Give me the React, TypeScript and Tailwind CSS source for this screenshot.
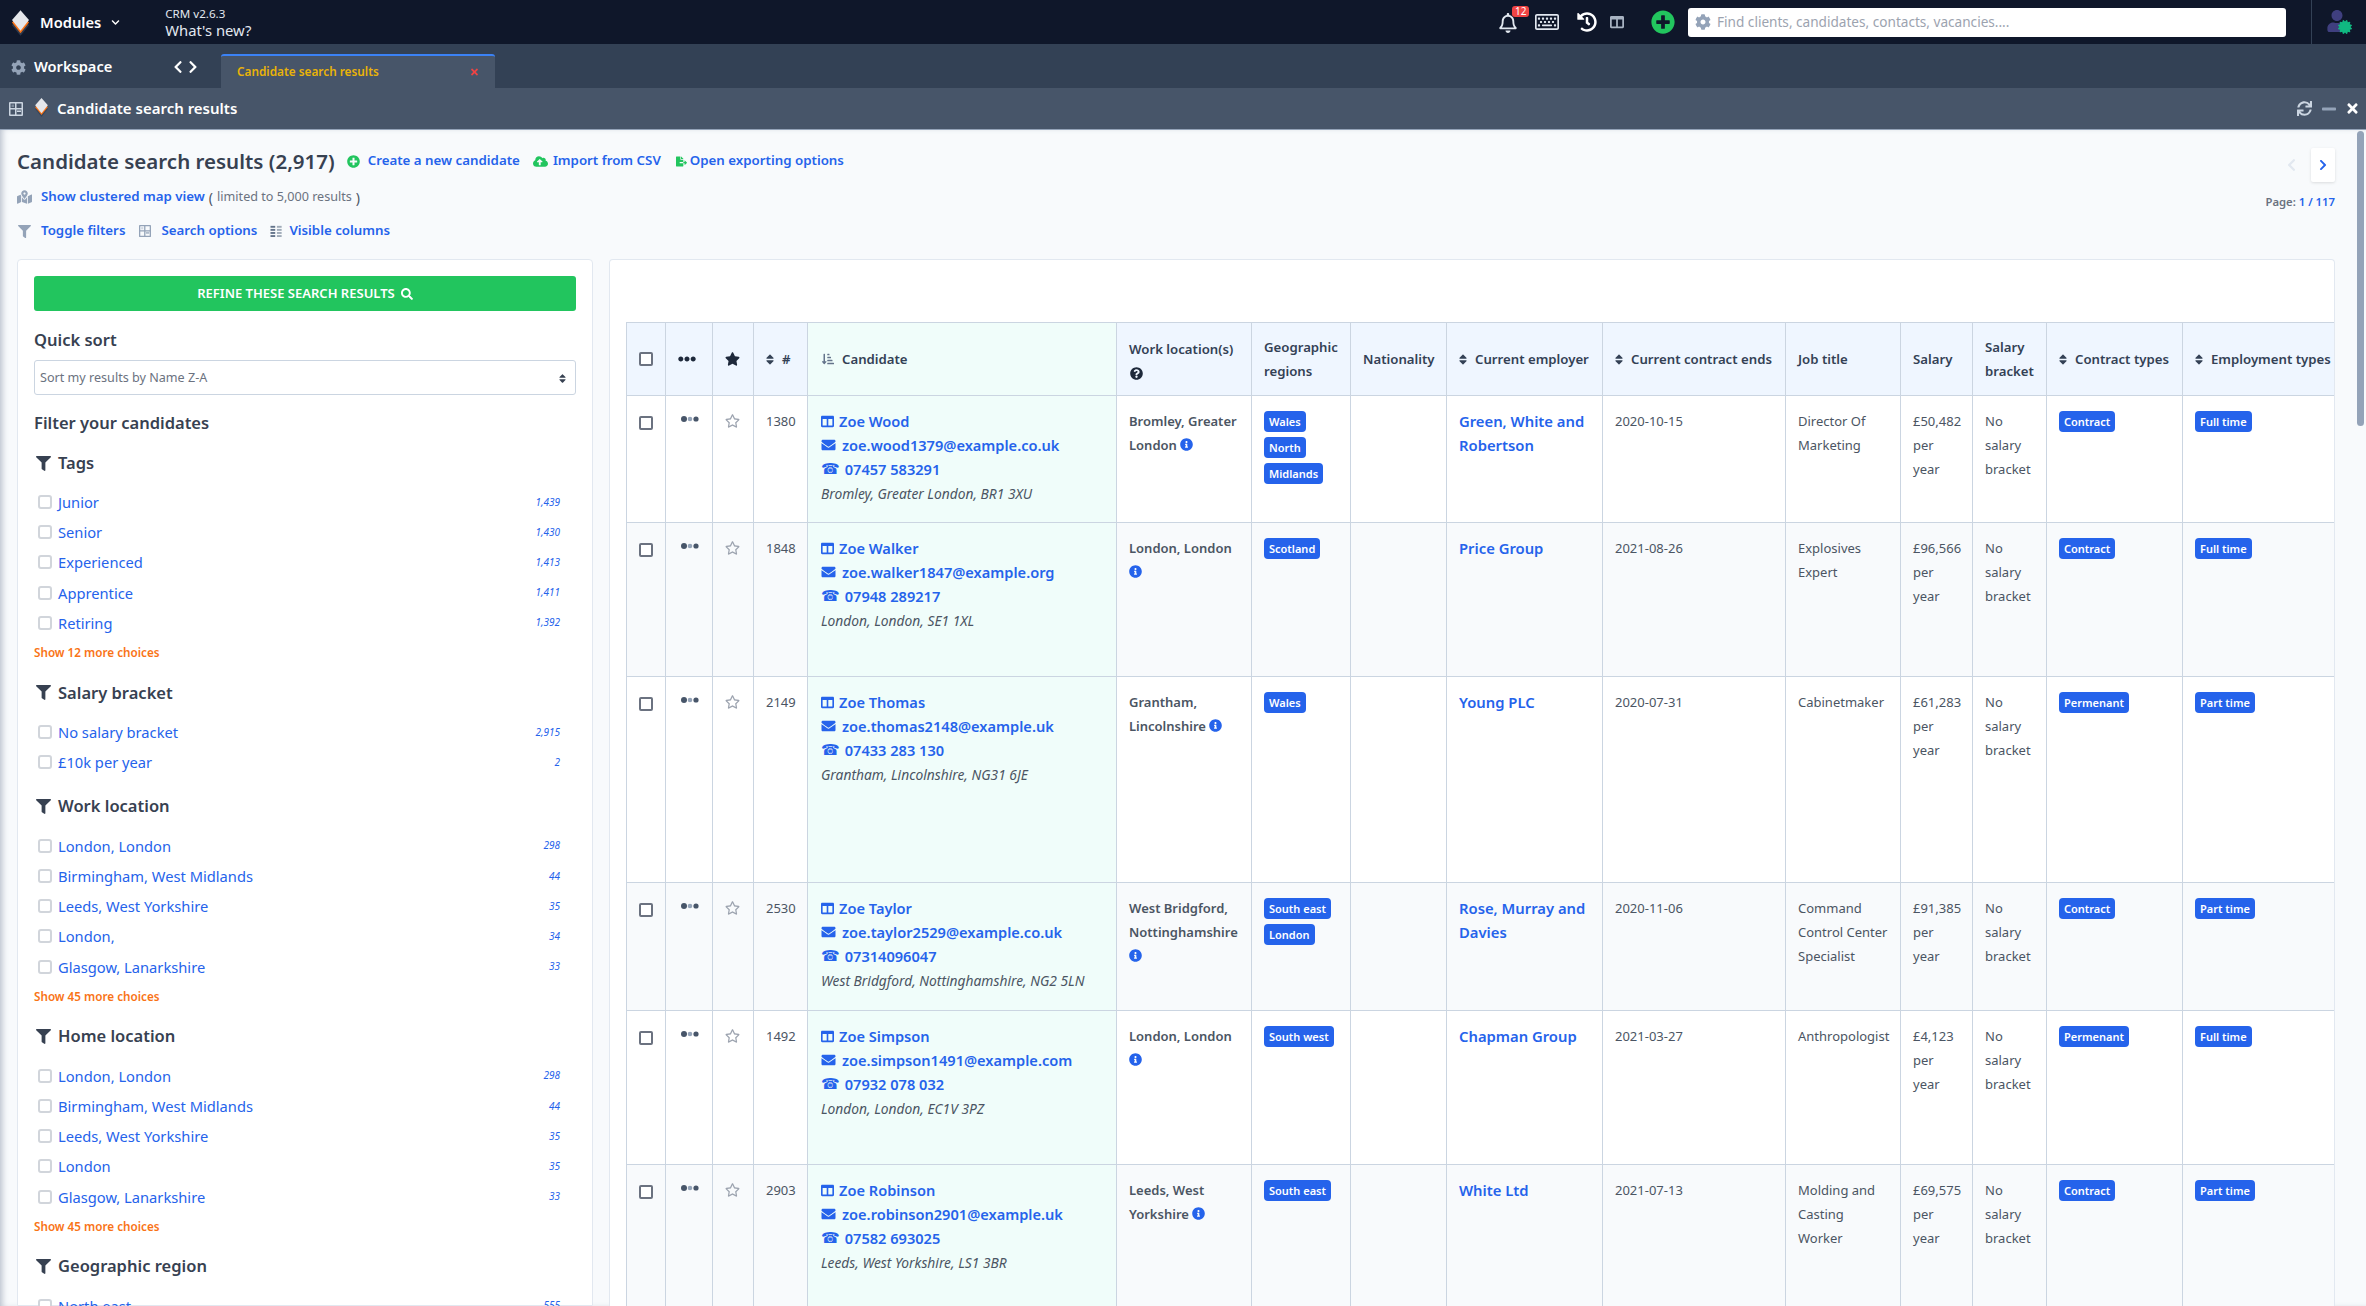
import { FaRegBell, FaRegKeyboard, FaHistory, FaPlusCircle, FaCog, FaChevronLeft, FaChevronRight, FaChevronDown, FaTimes, FaSync, FaMinus, FaCloudUploadAlt, FaFileExport, FaMapMarkedAlt, FaFilter, FaSearch, FaSort, FaEllipsisH, FaStar, FaRegStar, FaColumns, FaEnvelope, FaInfoCircle, FaQuestionCircle, FaSortAmountDownAlt, FaUser, FaCertificate } from 'react-icons/fa';

const Logo = ({ className }: { className?: string }) => (
  <svg viewBox="0 0 20 30" className={className} aria-hidden>
    <path d="M10 6 L20 17.5 L10 30 L0 17.5 Z" fill="#334155" opacity="0.8" />
    <path d="M10 3 L20 14.5 L10 27 L0 14.5 Z" fill="#f97316" />
    <path d="M10 0 L20 11.5 L10 24 L0 11.5 Z" fill="#e5e7eb" />
  </svg>
);

const LayoutIcon = ({ className }: { className?: string }) => (
  <svg viewBox="0 0 14 14" className={className} fill="currentColor" aria-hidden>
    <path d="M0 1a1 1 0 0 1 1-1h12a1 1 0 0 1 1 1v12a1 1 0 0 1-1 1H1a1 1 0 0 1-1-1Zm1.5.5v4.5h4.5V1.5Zm0 6V12.5h4.5V7.5Zm6 0v5h5v-5Zm0-6v4.5h5V1.5Z" fillRule="evenodd" />
    <rect x="2.5" y="2.5" width="2.5" height="2.5" opacity=".4" />
    <rect x="8" y="8.5" width="4" height="1.5" />
  </svg>
);

const ColumnsIcon = ({ className }: { className?: string }) => (
  <svg viewBox="0 0 14 14" className={className} fill="currentColor" aria-hidden>
    <rect x="0" y="1" width="5.5" height="2.2" /><rect x="0" y="4.6" width="5.5" height="2.2" /><rect x="0" y="8.2" width="5.5" height="2.2" /><rect x="0" y="11.8" width="5.5" height="2.2" />
    <rect x="7.5" y="1" width="5.5" height="2.2" opacity=".6" /><rect x="7.5" y="4.6" width="5.5" height="2.2" opacity=".6" /><rect x="7.5" y="8.2" width="5.5" height="2.2" opacity=".6" /><rect x="7.5" y="11.8" width="5.5" height="2.2" opacity=".6" />
  </svg>
);

const RowDots = () => (
  <svg viewBox="0 0 18 6" className="ml-[3px] h-[6px] w-[18px]" aria-hidden>
    <circle cx="3" cy="3" r="3" fill="#475569" /><circle cx="9" cy="3" r="2.3" fill="#94a3b8" /><circle cx="15" cy="3" r="2.6" fill="#475569" />
  </svg>
);

interface Section { title: string; items: [string, string][]; more?: number }
const SECTIONS: Section[] = [
  { title: 'Tags', more: 12, items: [['Junior', '1,439'], ['Senior', '1,430'], ['Experienced', '1,413'], ['Apprentice', '1,411'], ['Retiring', '1,392']] },
  { title: 'Salary bracket', items: [['No salary bracket', '2,915'], ['£10k per year', '2']] },
  { title: 'Work location', more: 45, items: [['London, London', '298'], ['Birmingham, West Midlands', '44'], ['Leeds, West Yorkshire', '35'], ['London,', '34'], ['Glasgow, Lanarkshire', '33']] },
  { title: 'Home location', more: 45, items: [['London, London', '298'], ['Birmingham, West Midlands', '44'], ['Leeds, West Yorkshire', '35'], ['London', '35'], ['Glasgow, Lanarkshire', '33']] },
  { title: 'Geographic region', items: [['North east', '555']] },
];

interface Row { h: string; num: number; name: string; email: string; phone: string; addr: string; loc: string; regions: string[]; employer: string; ends: string; job: string; salary: string; contract: string; employment: string }
const ROWS: Row[] = [
  { h: 'h-[127px]', num: 1380, name: 'Zoe Wood', email: 'zoe.wood1379@example.co.uk', phone: '07457 583291', addr: 'Bromley, Greater London, BR1 3XU', loc: 'Bromley, Greater London', regions: ['Wales', 'North', 'Midlands'], employer: 'Green, White and Robertson', ends: '2020-10-15', job: 'Director Of Marketing', salary: '£50,482 per year', contract: 'Contract', employment: 'Full time' },
  { h: 'h-[154px]', num: 1848, name: 'Zoe Walker', email: 'zoe.walker1847@example.org', phone: '07948 289217', addr: 'London, London, SE1 1XL', loc: 'London, London', regions: ['Scotland'], employer: 'Price Group', ends: '2021-08-26', job: 'Explosives Expert', salary: '£96,566 per year', contract: 'Contract', employment: 'Full time' },
  { h: 'h-[206px]', num: 2149, name: 'Zoe Thomas', email: 'zoe.thomas2148@example.uk', phone: '07433 283 130', addr: 'Grantham, Lincolnshire, NG31 6JE', loc: 'Grantham, Lincolnshire', regions: ['Wales'], employer: 'Young PLC', ends: '2020-07-31', job: 'Cabinetmaker', salary: '£61,283 per year', contract: 'Permenant', employment: 'Part time' },
  { h: 'h-[128px]', num: 2530, name: 'Zoe Taylor', email: 'zoe.taylor2529@example.co.uk', phone: '07314096047', addr: 'West Bridgford, Nottinghamshire, NG2 5LN', loc: 'West Bridgford, Nottinghamshire', regions: ['South east', 'London'], employer: 'Rose, Murray and Davies', ends: '2020-11-06', job: 'Command Control Center Specialist', salary: '£91,385 per year', contract: 'Contract', employment: 'Part time' },
  { h: 'h-[154px]', num: 1492, name: 'Zoe Simpson', email: 'zoe.simpson1491@example.com', phone: '07932 078 032', addr: 'London, London, EC1V 3PZ', loc: 'London, London', regions: ['South west'], employer: 'Chapman Group', ends: '2021-03-27', job: 'Anthropologist', salary: '£4,123 per year', contract: 'Permenant', employment: 'Full time' },
  { h: 'h-[154px]', num: 2903, name: 'Zoe Robinson', email: 'zoe.robinson2901@example.uk', phone: '07582 693025', addr: 'Leeds, West Yorkshire, LS1 3BR', loc: 'Leeds, West Yorkshire', regions: ['South east'], employer: 'White Ltd', ends: '2021-07-13', job: 'Molding and Casting Worker', salary: '£69,575 per year', contract: 'Contract', employment: 'Part time' },
];

const WIDTHS = ['w-[39px]', 'w-[47px]', 'w-[41px]', 'w-[54px]', 'w-[309px]', 'w-[135px]', 'w-[99px]', 'w-[96px]', 'w-[156px]', 'w-[183px]', 'w-[115px]', 'w-[72px]', 'w-[74px]', 'w-[136px]', 'w-[153px]'];
const th = 'border border-[#cbd5e1] px-[12px] text-left align-middle text-[13.2px] font-semibold leading-6 text-[#334155]';
const td = 'border border-[#cbd5e1] px-[12px] pt-[13px] align-top text-[13px] leading-6 text-[#4b5563]';
const link = 'text-[13.3px] font-semibold text-[#2563eb]';
const sortIcon = 'h-[13px] w-[8px] shrink-0';

const Tag = ({ children }: { children: string }) => (
  <div className="mb-[5px] w-fit whitespace-nowrap rounded-[4px] bg-[#2563eb] px-[5px] text-[11px] font-semibold leading-[21px] text-white">{children}</div>
);

const Box = ({ dark }: { dark?: boolean }) => (
  <input type="checkbox" aria-label="Select" className={dark ? 'block h-[14px] w-[14px] appearance-none rounded-[2px] border-2 border-[#6b7280] bg-white' : 'block h-[14px] w-[14px] shrink-0 appearance-none rounded-[3px] border-2 border-[#d1d5db] bg-white'} />
);

function FilterSection({ section }: { section: Section }) {
  return (
    <div className={section.more ? 'pb-[16px]' : 'pb-[17.5px]'}>
      <div className="mb-[12px] flex h-[24px] items-center text-[16.5px] font-semibold text-[#374151]">
        <FaFilter className="ml-[2px] mr-[7px] h-[15px] w-[15px] text-[#374151]" />{section.title}
      </div>
      {section.items.map(([label, count]) => (
        <div key={label} className="flex h-[30.2px] items-center pl-[4px] pr-[16px]">
          <Box />
          <span className="ml-[6px] flex-1 text-[14.7px] text-[#2563eb]">{label}</span>
          <span className="text-[10px] italic text-[#2563eb]">{count}</span>
        </div>
      ))}
      {section.more && <div className="mb-[5px] mt-[6px] text-[11.7px] font-semibold leading-[16px] text-[#f97316]">Show {section.more} more choices</div>}
    </div>
  );
}

export default function App() {
  return (
    <div className="flex h-[1306px] w-[2366px] flex-col overflow-hidden bg-[#f8fafc] font-['Noto_Sans',sans-serif]">
      {/* top bar */}
      <div className="flex h-[44px] shrink-0 items-center bg-[#0f172a] text-white">
        <Logo className="ml-[12px] mt-[2px] h-[26px] w-[17px]" />
        <span className="ml-[11px] text-[14.7px] font-semibold">Modules</span>
        <FaChevronDown className="ml-[10px] h-[9px] w-[9px]" />
        <div className="ml-[45px] flex flex-col text-[#e2e8f0]">
          <span className="text-[11.6px] leading-[15px]">CRM v2.6.3</span>
          <span className="text-[14.8px] leading-[18px]">What's new?</span>
        </div>
        <div className="relative ml-auto h-full w-[30px]">
          <FaRegBell className="absolute left-0 top-[13px] h-[20px] w-[18px] text-[#e2e8f0]" />
          <span className="absolute left-[13px] top-[6px] rounded-[3px] bg-[#ef4444] px-[3px] text-[10px] leading-[11px] text-white">12</span>
        </div>
        <FaRegKeyboard className="ml-[6px] h-[24px] w-[24px] text-[#e2e8f0]" />
        <FaHistory className="ml-[18px] h-[20px] w-[20px] text-white" />
        <FaColumns className="ml-[12px] h-[14px] w-[16px] text-[#a8b3c2]" />
        <FaPlusCircle className="ml-[26px] h-[24px] w-[24px] text-[#22c55e]" />
        <div className="ml-[13px] flex h-[29px] w-[598px] items-center rounded-[3px] bg-white pl-[7px]">
          <FaCog className="h-[16px] w-[16px] text-[#94a3b8]" />
          <span className="ml-[6px] pt-[1px] text-[13.6px] text-[#9ca3af]">Find clients, candidates, contacts, vacancies....</span>
        </div>
        <div className="ml-[25px] h-full w-px bg-[#334155]" />
        <div className="relative ml-[15px] mr-[14px] h-[24px] w-[25px]">
          <FaUser className="h-[22px] w-[20px] text-[#3f3f7f]" />
          <FaCertificate className="absolute bottom-0 right-0 h-[14px] w-[14px] text-[#10b981]" />
        </div>
      </div>

      {/* workspace tabs */}
      <div className="flex h-[44px] shrink-0 items-end bg-[#334155]">
        <div className="flex h-[44px] w-[221px] items-center pl-[11px] pt-[2px] text-white">
          <FaCog className="h-[15px] w-[15px] text-[#94a3b8]" />
          <span className="ml-[8px] text-[14.6px] font-semibold">Workspace</span>
          <FaChevronLeft className="ml-[60px] h-[14px] w-[12px]" />
          <FaChevronRight className="ml-[3px] h-[14px] w-[12px]" />
        </div>
        <div className="flex h-[34px] w-[274px] items-center justify-between rounded-t-[3px] border-t-2 border-[#3b82f6] bg-[#475569] px-[16px]">
          <span className="text-[11.8px] font-semibold text-[#eab308]">Candidate search results</span>
          <FaTimes className="h-[10px] w-[9px] text-[#ef4444]" />
        </div>
      </div>

      {/* window title */}
      <div className="flex h-[42px] shrink-0 items-center border-b border-[#94a3b8] bg-[#475569] text-white">
        <LayoutIcon className="ml-[9px] h-[14px] w-[14px] text-[#cbd5e1]" />
        <Logo className="mb-[3px] ml-[12px] h-[19px] w-[13px]" />
        <span className="ml-[9px] text-[15px] font-semibold">Candidate search results</span>
        <FaSync className="ml-auto h-[15px] w-[15px] text-[#cbd5e1]" />
        <FaMinus className="ml-[9px] h-[16px] w-[16px] text-[#94a3b8]" />
        <FaTimes className="ml-[9px] mr-[7px] h-[15px] w-[13px]" />
      </div>

      {/* content */}
      <div className="flex min-h-0 flex-1 shadow-[inset_5px_0_6px_-3px_rgba(100,116,139,0.45)]">
        <div className="min-w-0 flex-1 pl-[17px] pr-[21px]">
          <div className="flex h-[129px] justify-between">
            <div>
              <div className="mt-[18px] flex h-[26px] items-center">
                <h1 className="text-[20.5px] font-semibold text-[#374151]">Candidate search results (2,917)</h1>
                <FaPlusCircle className="ml-[12px] h-[13px] w-[13px] text-[#22c55e]" />
                <a className={`ml-[8px] ${link}`}>Create a new candidate</a>
                <FaCloudUploadAlt className="ml-[13px] h-[15px] w-[15px] text-[#22c55e]" />
                <a className={`ml-[5px] ${link}`}>Import from CSV</a>
                <FaFileExport className="ml-[15px] h-[13px] w-[11px] text-[#22c55e]" />
                <a className={`ml-[3px] ${link}`}>Open exporting options</a>
              </div>
              <div className="mt-[14px] flex h-[18px] items-center">
                <FaMapMarkedAlt className="h-[14px] w-[15px] text-[#94a3b8]" />
                <a className={`ml-[9px] ${link}`}>Show clustered map view</a>
                <span className="ml-[4px] text-[14px] text-[#4b5563]">(</span>
                <span className="ml-[4px] text-[12.6px] text-[#6b7280]">limited to 5,000 results</span>
                <span className="ml-[4px] text-[14px] text-[#4b5563]">)</span>
              </div>
              <div className="mt-[16px] flex h-[18px] items-center">
                <FaFilter className="ml-[1px] h-[13px] w-[13px] text-[#94a3b8]" />
                <a className={`ml-[10px] ${link}`}>Toggle filters</a>
                <LayoutIcon className="ml-[14px] h-[12px] w-[12px] text-[#94a3b8]" />
                <a className={`ml-[10px] ${link}`}>Search options</a>
                <ColumnsIcon className="ml-[13px] h-[12px] w-[13px] text-[#64748b]" />
                <a className={`ml-[6px] ${link}`}>Visible columns</a>
              </div>
            </div>
            <div className="flex flex-col items-end pt-[18px]">
              <div className="flex items-center">
                <FaChevronLeft className="mr-[15px] h-[14px] w-[9px] text-[#e2e8f0]" />
                <div className="flex h-[34px] w-[24px] items-center justify-center rounded-[2px] bg-white shadow-[0_1px_3px_rgba(0,0,0,0.12)]">
                  <FaChevronRight className="h-[12px] w-[8px] text-[#2563eb]" />
                </div>
              </div>
              <div className="mt-[11px] text-[11.3px] font-semibold leading-[18px] text-[#6b7280]">Page: <span className="text-[#2563eb]">1 / 117</span></div>
            </div>
          </div>

          <div className="flex h-[1047px] gap-[16px] overflow-hidden">
            {/* filters */}
            <aside className="h-full w-[576px] shrink-0 rounded-t-[4px] border border-[#e2e8f0] bg-white px-[16px] pt-[16px]">
              <button className="flex h-[35px] w-full items-center justify-center gap-[6px] rounded-[3px] bg-[#22c55e] text-[13px] font-semibold text-white">
                REFINE THESE SEARCH RESULTS <FaSearch className="h-[12px] w-[12px]" />
              </button>
              <div className="mt-[17px] text-[16.5px] font-semibold leading-[24px] text-[#374151]">Quick sort</div>
              <div className="mt-[8px] flex h-[35px] items-center justify-between rounded-[3px] border border-[#cbd5e1] pl-[5px] pr-[8px] pt-[1px] text-[12.6px] text-[#6b7280]">
                Sort my results by Name Z-A
                <FaSort className="h-[11px] w-[9px] text-[#374151]" />
              </div>
              <div className="mb-[16px] mt-[16px] text-[16.5px] font-semibold leading-[24px] text-[#374151]">Filter your candidates</div>
              {SECTIONS.map((s) => <FilterSection key={s.title} section={s} />)}
            </aside>

            {/* results */}
            <section className="h-full min-w-0 flex-1 overflow-hidden rounded-t-[4px] border-l border-r border-t border-[#e2e8f0] bg-white pl-[16px] pt-[62px]">
              <table className="w-[1709px] table-fixed border-collapse">
                <colgroup>{WIDTHS.map((w, i) => <col key={i} className={w} />)}</colgroup>
                <thead>
                  <tr className="h-[73px] bg-[#eff6ff]">
                    <th className={th}><Box dark /></th>
                    <th className={th}><FaEllipsisH className="h-[18px] w-[18px] text-[#1e293b]" /></th>
                    <th className={th}><FaStar className="h-[14px] w-[15px] text-[#1e293b]" /></th>
                    <th className={th}><span className="flex items-center gap-[8px]"><FaSort className={sortIcon} />#</span></th>
                    <th className={`${th} bg-[#f0fdfa]`}><span className="flex items-center gap-[8px] pl-[2px]"><FaSortAmountDownAlt className="h-[12px] w-[12px] text-[#64748b]" />Candidate</span></th>
                    <th className={th}>Work location(s)<FaQuestionCircle className="mb-[2px] ml-[1px] mt-[6px] h-[13px] w-[13px] text-[#1e293b]" /></th>
                    <th className={th}>Geographic regions</th>
                    <th className={th}>Nationality</th>
                    <th className={th}><span className="flex items-center gap-[8px] whitespace-nowrap"><FaSort className={sortIcon} />Current employer</span></th>
                    <th className={th}><span className="flex items-center gap-[8px] whitespace-nowrap"><FaSort className={sortIcon} />Current contract ends</span></th>
                    <th className={th}>Job title</th>
                    <th className={th}>Salary</th>
                    <th className={th}>Salary bracket</th>
                    <th className={th}><span className="flex items-center gap-[8px] whitespace-nowrap"><FaSort className={sortIcon} />Contract types</span></th>
                    <th className={th}><span className="flex items-center gap-[8px] whitespace-nowrap"><FaSort className={sortIcon} />Employment types</span></th>
                  </tr>
                </thead>
                <tbody>
                  {ROWS.map((r, i) => (
                    <tr key={r.num} className={`${r.h} ${i % 2 === 1 ? 'bg-[#f8fafc]' : 'bg-white'}`}>
                      <td className={`${td} pt-[20px]`}><Box dark /></td>
                      <td className={`${td} pt-[20px]`}><RowDots /></td>
                      <td className={`${td} pt-[18px]`}><FaRegStar className="h-[14px] w-[15px] text-[#9ca3af]" /></td>
                      <td className={td}>{r.num}</td>
                      <td className={`${td} bg-[#f0fdfa] pl-[13px]`}>
                        <div className="flex h-6 items-center text-[14.6px] font-semibold text-[#2563eb]"><FaColumns className="mr-[5px] h-[13px] w-[13px]" />{r.name}</div>
                        <div className="flex h-6 items-center text-[14.6px] font-semibold text-[#2563eb]"><FaEnvelope className="mr-[6px] h-[14px] w-[15px]" />{r.email}</div>
                        <div className="flex h-6 items-center text-[14.6px] font-semibold text-[#2563eb]"><span className="mr-[5px] font-['DejaVu_Sans'] text-[15px] leading-none">☎</span>{r.phone}</div>
                        <div className="h-6 pt-[1px] text-[13.8px] italic">{r.addr}</div>
                      </td>
                      <td className={`${td} font-semibold`}>{r.loc} <FaInfoCircle className="inline h-[13px] w-[13px] align-[-1px] text-[#2563eb]" /></td>
                      <td className={`${td} pt-[15px]`}>{r.regions.map((g) => <Tag key={g}>{g}</Tag>)}</td>
                      <td className={td} />
                      <td className={`${td} text-[14.8px] font-semibold text-[#2563eb]`}>{r.employer}</td>
                      <td className={td}>{r.ends}</td>
                      <td className={`${td} text-[13.6px]`}>{r.job}</td>
                      <td className={td}>{r.salary}</td>
                      <td className={td}>No salary bracket</td>
                      <td className={`${td} pt-[15px]`}><Tag>{r.contract}</Tag></td>
                      <td className={`${td} pt-[15px]`}><Tag>{r.employment}</Tag></td>
                    </tr>
                  ))}
                </tbody>
              </table>
            </section>
          </div>
        </div>
        {/* scrollbar */}
        <div className="w-[10px] shrink-0 pl-px pr-[2px] pt-px">
          <div className="h-[295px] rounded-full bg-[#94a3b8]" />
        </div>
      </div>
    </div>
  );
}
